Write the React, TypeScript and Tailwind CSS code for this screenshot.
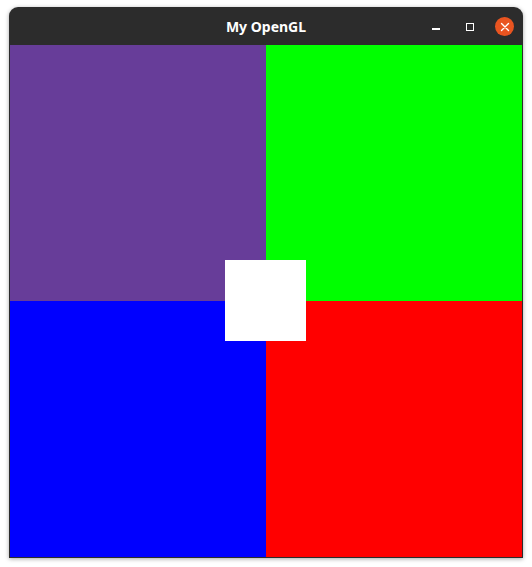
import React from 'react';

const App: React.FC = () => {
  return (
    <div className="w-[532px] h-[567px] bg-white pt-[7px] pl-[9px]" style={{ fontFamily: '"Noto Sans", "DejaVu Sans", sans-serif' }}>
      {/* Window */}
      <div className="w-[514px] rounded-t-[9px] bg-[#2c2c2c] shadow-[0_1px_4px_rgba(0,0,0,0.35)] overflow-hidden">
        {/* Title bar */}
        <div className="relative h-[38px] flex items-center justify-center">
          <span className="text-white font-bold text-[14px]">My OpenGL</span>
          <div className="absolute right-[9px] top-[10px] h-[19px] flex items-center">
            <div className="w-[8px] h-[8px] flex items-end pb-[1px]">
              <div className="w-[8px] h-[1.5px] bg-white" />
            </div>
            <div className="ml-[26px] w-[8px] h-[8px] border border-white" />
            <div className="ml-[21px] w-[19px] h-[19px] rounded-full bg-[#e95420] flex items-center justify-center">
              <svg width="10" height="10" viewBox="0 0 10 10">
                <path d="M1.5 1.5 L8.5 8.5 M8.5 1.5 L1.5 8.5" stroke="white" strokeWidth="1.4" strokeLinecap="round" />
              </svg>
            </div>
          </div>
        </div>
        {/* GL content */}
        <div className="px-[1px] pb-[1px]">
          <div className="relative grid grid-cols-2 grid-rows-2 w-[512px] h-[512px]">
            <div className="bg-[#673d99]" />
            <div className="bg-[#00ff00]" />
            <div className="bg-[#0000ff]" />
            <div className="bg-[#ff0000]" />
            <div className="absolute left-[215px] top-[215px] w-[81px] h-[81px] bg-white" />
          </div>
        </div>
      </div>
    </div>
  );
};

export default App;
